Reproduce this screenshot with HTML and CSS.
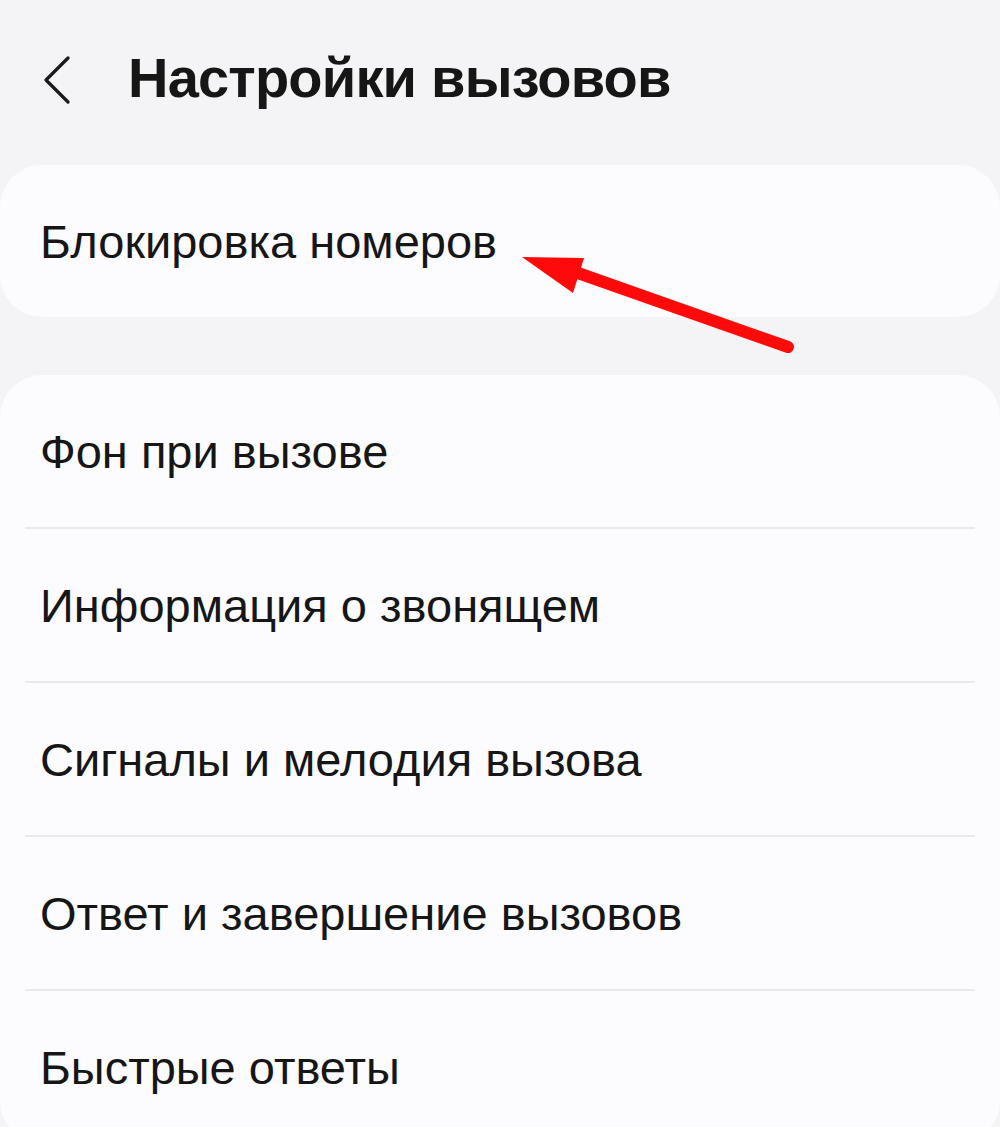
FILE: index.html
```html
<!DOCTYPE html>
<html lang="ru">
<head>
    <meta charset="UTF-8">
    <meta name="viewport" content="width=device-width, initial-scale=1.0">
    <title>Настройки вызовов</title>
    <link rel="stylesheet" href="styles.css">
</head>
<body>
    <div class="header">
        <svg class="back" width="30" height="52" viewBox="0 0 30 52">
            <polyline points="25,6 3,28 25,50" fill="none" stroke="#1a1a1a" stroke-width="3.2" stroke-linecap="round" stroke-linejoin="round"/>
        </svg>
        <h1>Настройки вызовов</h1>
    </div>

    <div class="card single">
        <div class="row">Блокировка номеров</div>
        <!-- стрелка поверх карточки -->
        <svg class="arrow" width="300" height="120" viewBox="0 0 300 120">
            <line x1="270" y1="94" x2="60" y2="20" stroke="#ff0a0a" stroke-width="12" stroke-linecap="round"/>
            <polygon points="4,4 66,5 55,40" fill="#ff0a0a"/>
        </svg>
    </div>

    <div class="card list">
        <div class="row">Фон при вызове</div>
        <div class="row">Информация о звонящем</div>
        <div class="row">Сигналы и мелодия вызова</div>
        <div class="row">Ответ и завершение вызовов</div>
        <div class="row">Быстрые ответы</div>
    </div>
</body>
</html>
```

FILE: styles.css
```css
body {
    margin: 0;
    background-color: #f4f4f6;
    font-family: "Liberation Sans", Arial, sans-serif;
    color: #161616;
    overflow: hidden;
}
.header {
    display: flex;
    align-items: center;
    height: 165px;
    padding-left: 43px;
    box-sizing: border-box;
    padding-bottom: 10px;
}
.back {
    margin-right: 55px;
}
h1 {
    margin: 0;
    font-size: 56px;
    font-weight: bold;
    letter-spacing: -0.8px;
}
.card {
    background-color: #fcfcfe;
    border-radius: 42px;
    position: relative;
}
.single {
    margin-bottom: 58px;
}
.row {
    height: 152px;
    display: flex;
    align-items: center;
    padding-left: 40px;
    font-size: 47px;
}
.list .row + .row {
    border-top: 2px solid #e9e9eb;
    margin: 0 25px;
    padding-left: 15px;
}
.list .row:first-child {
    margin: 0;
}
.arrow {
    position: absolute;
    left: 518px;
    top: 88px;
}
```
